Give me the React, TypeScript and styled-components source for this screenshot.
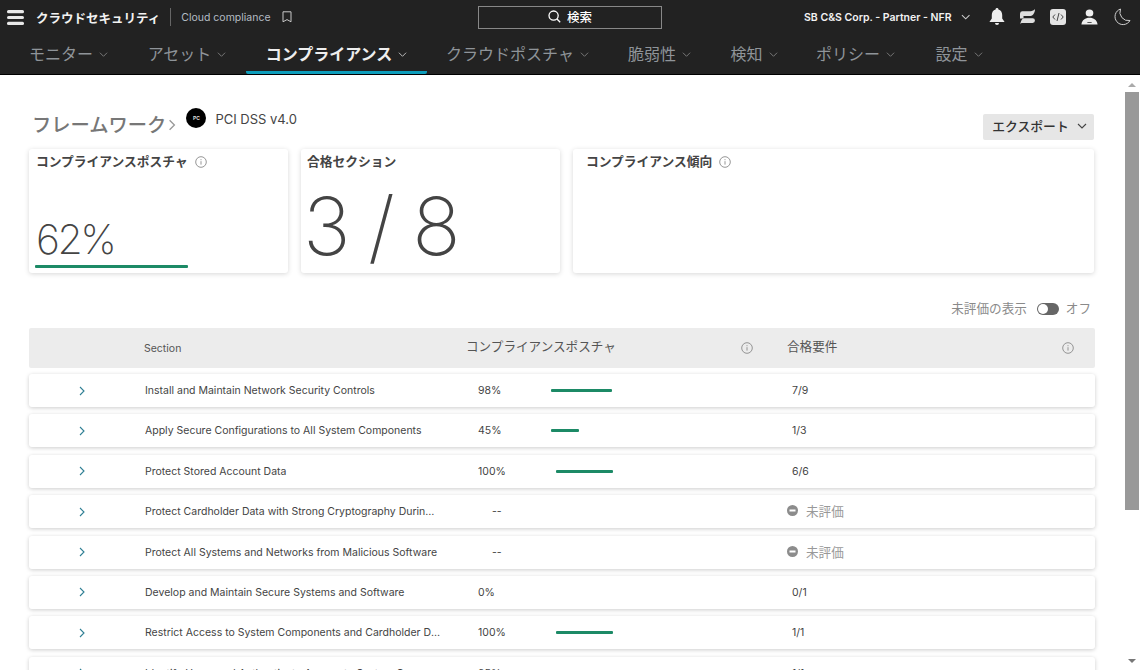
import React from "react";
import styled, { createGlobalStyle } from "styled-components";

const GlobalStyle = createGlobalStyle`
  html, body {
    margin: 0;
    height: 100%;
    overflow: hidden;
    background: #fff;
    font-family: Inter, "Noto Sans CJK JP", sans-serif;
  }
`;

const NAV_ITEMS = [
  { label: "モニター", width: 119 },
  { label: "アセット", width: 118 },
  { label: "コンプライアンス", width: 181, active: true },
  { label: "クラウドポスチャ", width: 181 },
  { label: "脆弱性", width: 103 },
  { label: "検知", width: 86 },
  { label: "ポリシー", width: 117 },
  { label: "設定", width: 90 },
];

const ROWS = [
  { name: "Install and Maintain Network Security Controls", pct: "98%", bar: 61, pass: "7/9" },
  { name: "Apply Secure Configurations to All System Components", pct: "45%", bar: 28, pass: "1/3" },
  { name: "Protect Stored Account Data", pct: "100%", bar: 57, pass: "6/6" },
  { name: "Protect Cardholder Data with Strong Cryptography During Transmission", pct: "--" },
  { name: "Protect All Systems and Networks from Malicious Software", pct: "--" },
  { name: "Develop and Maintain Secure Systems and Software", pct: "0%", bar: 0, pass: "0/1" },
  { name: "Restrict Access to System Components and Cardholder Data", pct: "100%", bar: 57, pass: "1/1" },
  { name: "Identify Users and Authenticate Access to System Components", pct: "95%", bar: 57, pass: "1/1" },
];

function Chevron({ size = 8, color = "#888", dir = "down" }: { size?: number; color?: string; dir?: "down" | "right" }) {
  const d = dir === "down" ? "M1 3l4 4 4-4" : "M3 1l4 4-4 4";
  return (
    <svg width={size} height={size} viewBox="0 0 10 10" fill="none" stroke={color} strokeWidth="1.1">
      <path d={d} />
    </svg>
  );
}

function InfoIcon({ color = "#8a8a8a" }: { color?: string }) {
  return (
    <svg width="12" height="12" viewBox="0 0 12 12" fill="none" stroke={color} strokeWidth="0.9">
      <circle cx="6" cy="6" r="5.3" />
      <path d="M6 5.2v3.4M6 3.2v1" />
    </svg>
  );
}

export default function App() {
  return (
    <>
      <GlobalStyle />
      <Page>
        <Header>
          <TopBar>
            <Brand>
              <svg width="17" height="15" viewBox="0 0 17 15" fill="#e8e8e8">
                <rect y="0" width="17" height="3.2" rx="1.5" />
                <rect y="5.9" width="17" height="3.2" rx="1.5" />
                <rect y="11.8" width="17" height="3.2" rx="1.5" />
              </svg>
              <BrandName>クラウドセキュリティ</BrandName>
              <Divider />
              <Crumb>Cloud compliance</Crumb>
              <svg width="10" height="12" viewBox="0 0 10 12" fill="none" stroke="#c8c8c8" strokeWidth="1">
                <path d="M1 .8h8v10L5 8.6 1 10.8z" />
              </svg>
            </Brand>
            <SearchBox>
              <svg width="13" height="13" viewBox="0 0 13 13" fill="none" stroke="#fff" strokeWidth="1.3">
                <circle cx="5.6" cy="5.6" r="4.6" />
                <path d="M9 9l3.2 3.2" />
              </svg>
              検索
            </SearchBox>
            <Account>
              <Tenant>SB C&amp;S Corp. - Partner - NFR</Tenant>
              <Chevron size={10} color="#ccc" />
            </Account>
            <Tools>
              <svg width="16" height="18" viewBox="0 0 16 18" fill="#eee">
                <path d="M8 0a1.4 1.4 0 0 1 1.4 1.5C12 2.2 13.2 4.4 13.2 7v3.6L15.6 14H.4l2.4-3.4V7c0-2.6 1.2-4.8 3.8-5.5A1.4 1.4 0 0 1 8 0zM6 15h4a2 2 0 0 1-4 0z" />
              </svg>
              <svg width="15" height="16" viewBox="0 0 15 16" fill="#dedede">
                <path d="M2.4 2.3H10.5C12.3 2.2 13.9 1.3 15 0C15 3.3 13.4 6.7 10.5 6.9H2.4a2.3 2.3 0 0 1 0-4.6z" />
                <path d="M0 4.5h3.5v5H0z" />
                <path d="M12.6 9.2H4.5C2.7 9.3 1.1 10.5 0 16C0 15.8.2 13.9 2 13.9H12.6a2.35 2.35 0 0 0 0-4.7z" />
              </svg>
              <CodeBadge>
                <svg width="12" height="10" viewBox="0 0 12 10" fill="none" stroke="#333" strokeWidth="0.9">
                  <path d="M3 2.5L.8 5 3 7.5M9 2.5L11.2 5 9 7.5M7 1L5 9" />
                </svg>
              </CodeBadge>
              <svg width="17" height="16" viewBox="0 0 16 16" fill="#eee" preserveAspectRatio="none">
                <circle cx="8" cy="4" r="3.6" />
                <path d="M.4 15.5C1 11 4 8.8 8 8.8s7 2.2 7.6 6.7zM6 13h4v.8H6z" fillRule="evenodd" />
              </svg>
              <svg width="18" height="18" viewBox="0 0 18 18" fill="none" stroke="#cfcfcf" strokeWidth="1">
                <path d="M7.5 1A8 8 0 1 0 17 12.5 8.5 8.5 0 0 1 7.5 1z" />
              </svg>
            </Tools>
          </TopBar>
          <Nav>
            {NAV_ITEMS.map((item) => (
              <NavItem key={item.label} $width={item.width} $active={item.active}>
                {item.label}
                <NavCaret>
                  <Chevron size={9} color={item.active ? "#bbb" : "#777"} />
                </NavCaret>
              </NavItem>
            ))}
          </Nav>
        </Header>
        <Body>
          <Content>
            <TitleRow>
              <Title>フレームワーク</Title>
              <TitleSep>
                <Chevron size={12} color="#999" dir="right" />
              </TitleSep>
              <Logo>PC</Logo>
              <FrameworkName>PCI DSS v4.0</FrameworkName>
              <ExportButton>
                エクスポート
                <Chevron size={10} color="#444" />
              </ExportButton>
            </TitleRow>
            <Cards>
              <Card>
                <CardTitle>
                  コンプライアンスポスチャ
                  <InfoIcon />
                </CardTitle>
                <Percent>62%</Percent>
                <PostureBar />
              </Card>
              <Card $pad={6}>
                <CardTitle>合格セクション</CardTitle>
                <BigCount>3 / 8</BigCount>
              </Card>
              <Card $pad={13}>
                <CardTitle>
                  コンプライアンス傾向
                  <InfoIcon />
                </CardTitle>
              </Card>
            </Cards>
            <ToggleRow>
              未評価の表示
              <ToggleTrack>
                <ToggleKnob />
              </ToggleTrack>
              オフ
            </ToggleRow>
            <TableHead>
              <HeadSection>Section</HeadSection>
              <HeadLabel>コンプライアンスポスチャ</HeadLabel>
              <InfoIcon />
              <HeadLabel>合格要件</HeadLabel>
              <InfoIcon />
            </TableHead>
            <RowList>
              {ROWS.map((row) => (
                <Row key={row.name}>
                  <Expander>
                    <Chevron size={10} color="#2f7f94" dir="right" />
                  </Expander>
                  <SectionName>{row.name}</SectionName>
                  <PostureCell $empty={row.pct === "--"}>
                    {row.pct}
                    {row.bar ? <MiniBar style={{ width: row.bar }} /> : null}
                  </PostureCell>
                  {row.pass ? (
                    <PassCount>{row.pass}</PassCount>
                  ) : (
                    <NotRated>
                      <svg width="11" height="11" viewBox="0 0 11 11">
                        <circle cx="5.5" cy="5.5" r="5.5" fill="#8c8c8c" />
                        <rect x="2.5" y="4.5" width="6" height="2" fill="#fff" />
                      </svg>
                      未評価
                    </NotRated>
                  )}
                </Row>
              ))}
            </RowList>
          </Content>
          <ScrollRail>
            <ScrollArrow />
            <ScrollThumb />
            <ScrollArrow $down />
          </ScrollRail>
        </Body>
      </Page>
    </>
  );
}

const Page = styled.div`
  height: 670px;
  display: flex;
  flex-direction: column;
  overflow: hidden;
`;

const Header = styled.header`
  flex: none;
  height: 74px;
  background: #222;
  border-bottom: 1px solid #000;
`;

const TopBar = styled.div`
  height: 34px;
  display: flex;
  align-items: center;
  padding: 0 0 0 7px;
`;

const Brand = styled.div`
  width: 471px;
  display: flex;
  align-items: center;
`;

const BrandName = styled.span`
  margin-left: 12px;
  font-size: 12.5px;
  font-weight: 700;
  color: #f2f2f2;
`;

const Divider = styled.span`
  width: 1px;
  height: 18px;
  margin: 0 10px;
  background: #666;
`;

const Crumb = styled.span`
  margin-right: 11px;
  font-size: 10.5px;
  color: #b4bcc4;
`;

const SearchBox = styled.div`
  box-sizing: border-box;
  width: 184px;
  height: 23px;
  padding-bottom: 2px;
  border: 1px solid #888;
  display: flex;
  align-items: center;
  justify-content: center;
  gap: 6px;
  font-size: 12.5px;
  font-weight: 500;
  color: #fff;
`;

const Account = styled.div`
  margin-left: 142px;
  width: 166px;
  display: flex;
  align-items: center;
  gap: 9px;
`;

const Tenant = styled.span`
  font-size: 10.5px;
  font-weight: 600;
  color: #f2f2f2;
  white-space: nowrap;
`;

const Tools = styled.div`
  margin-left: 19px;
  display: flex;
  align-items: center;
  gap: 15px;
`;

const CodeBadge = styled.span`
  width: 16px;
  height: 16px;
  border-radius: 3px;
  background: #e4e4e4;
  display: flex;
  align-items: center;
  justify-content: center;
`;

const Nav = styled.nav`
  height: 40px;
  display: flex;
  padding-left: 9px;
`;

const NavItem = styled.div<{ $width: number; $active?: boolean }>`
  width: ${(p) => p.$width}px;
  box-sizing: border-box;
  display: flex;
  align-items: center;
  justify-content: center;
  gap: 6px;
  font-size: 16px;
  font-weight: ${(p) => (p.$active ? 700 : 400)};
  color: ${(p) => (p.$active ? "#eee" : "#8f9499")};
  border-bottom: 3px solid ${(p) => (p.$active ? "#0d9dbb" : "transparent")};
  border-radius: 0 0 2px 2px;
`;

const NavCaret = styled.span`
  display: flex;
  margin-top: 3px;
`;

const Body = styled.main`
  flex: 1;
  min-height: 0;
  display: flex;
`;

const Content = styled.div`
  flex: 1;
  min-width: 0;
  padding: 33px 28px 0 29px;
  overflow: hidden;
`;

const TitleRow = styled.div`
  height: 41px;
  display: flex;
  align-items: flex-start;
`;

const Title = styled.h1`
  margin: 3px 0 0 3px;
  font-size: 19.3px;
  line-height: 28px;
  font-weight: 500;
  color: #777;
`;

const TitleSep = styled.span`
  margin: 7px 8px 0 0;
`;

const Logo = styled.span`
  width: 20px;
  height: 20px;
  border-radius: 50%;
  background: #000;
  color: #ddd;
  font-size: 5px;
  font-weight: 700;
  display: flex;
  align-items: center;
  justify-content: center;
`;

const FrameworkName = styled.span`
  margin-left: 9px;
  font-size: 13px;
  line-height: 22px;
  color: #444;
`;

const ExportButton = styled.button`
  margin: 6px 1px 0 auto;
  padding: 0 0 3px 2px;
  width: 111px;
  height: 26px;
  border: 0;
  border-radius: 2px;
  background: #e6e6e6;
  display: flex;
  align-items: center;
  justify-content: center;
  gap: 8px;
  font: 500 12.8px Inter, "Noto Sans CJK JP", sans-serif;
  color: #333;
`;

const Cards = styled.div`
  display: grid;
  grid-template-columns: 259px 259px 521px;
  gap: 13px;
  height: 124px;
`;

const Card = styled.section<{ $pad?: number }>`
  position: relative;
  box-sizing: border-box;
  padding: 4px ${(p) => p.$pad ?? 7}px 0;
  border-radius: 3px;
  background: #fff;
  box-shadow: 0 1px 5px rgba(0, 0, 0, 0.16);
  overflow: hidden;
`;

const CardTitle = styled.h2`
  margin: 0;
  display: flex;
  align-items: center;
  gap: 7px;
  font-size: 12.75px;
  line-height: 18px;
  font-weight: 700;
  color: #444;
`;

const Percent = styled.div`
  margin-top: 43px;
  font-size: 41px;
  line-height: 50px;
  font-weight: 200;
  letter-spacing: -2.5px;
  color: #444;
`;

const PostureBar = styled.div`
  width: 153px;
  height: 3px;
  margin: 1px 0 0 -1px;
  background: #1c8a66;
  border-radius: 1px;
`;

const BigCount = styled.div`
  margin: 10px 0 0 -4px;
  font-size: 80px;
  line-height: 90px;
  font-weight: 200;
  word-spacing: -5px;
  color: #444;
  white-space: nowrap;
`;

const ToggleRow = styled.div`
  height: 55px;
  display: flex;
  align-items: flex-end;
  justify-content: flex-end;
  gap: 7px;
  padding: 0 4px 11px 0;
  box-sizing: border-box;
  font-size: 12.6px;
  line-height: 16px;
  color: #8a8a8a;
`;

const ToggleTrack = styled.span`
  position: relative;
  width: 22px;
  height: 12px;
  margin: 0 0 2px 3px;
  border-radius: 6px;
  background: #666;
`;

const ToggleKnob = styled.span`
  position: absolute;
  left: 1px;
  top: 1px;
  width: 10px;
  height: 10px;
  border-radius: 50%;
  background: #fff;
`;

const TableHead = styled.div`
  height: 40px;
  display: grid;
  grid-template-columns: 115px 322px 275px 46px 275px 12px;
  align-items: center;
  background: #ececec;
  border-radius: 2px;
  color: #555;
`;

const HeadSection = styled.span`
  grid-column: 2;
  font-size: 10.5px;
`;

const HeadLabel = styled.span`
  padding-bottom: 5px;
  font-size: 12.6px;
  white-space: nowrap;
`;

const RowList = styled.div`
  margin-top: 6px;
  display: flex;
  flex-direction: column;
  gap: 7.4px;
`;

const Row = styled.div`
  flex: none;
  height: 33px;
  display: grid;
  grid-template-columns: 116px 333px 309px 1fr;
  align-items: center;
  border-radius: 3px;
  background: #fff;
  box-shadow: 0 1px 4px rgba(0, 0, 0, 0.2);
  font-size: 10.5px;
  color: #444;
`;

const Expander = styled.span`
  justify-self: center;
  display: flex;
  transform: translateX(-5px);
`;

const SectionName = styled.span`
  width: 295.7px;
  overflow: hidden;
  white-space: nowrap;
  text-overflow: ellipsis;
`;

const PostureCell = styled.span<{ $empty?: boolean }>`
  display: flex;
  align-items: center;
  gap: 50px;
  padding-left: ${(p) => (p.$empty ? 14 : 0)}px;
`;

const MiniBar = styled.span`
  height: 3px;
  background: #1c8a66;
  border-radius: 1px;
`;

const PassCount = styled.span`
  padding-left: 5px;
`;

const NotRated = styled.span`
  display: flex;
  align-items: center;
  gap: 8px;
  padding-bottom: 2px;
  font-size: 12.6px;
  color: #999;
`;

const ScrollRail = styled.aside`
  flex: none;
  width: 17px;
  display: flex;
  flex-direction: column;
  align-items: center;
  padding-top: 8px;
`;

const ScrollArrow = styled.span<{ $down?: boolean }>`
  flex: none;
  width: 0;
  height: 0;
  border-left: 4px solid transparent;
  border-right: 4px solid transparent;
  ${(p) => (p.$down ? "border-top: 4px solid #777;" : "border-bottom: 4px solid #aaa;")}
`;

const ScrollThumb = styled.div`
  flex: none;
  width: 14px;
  height: 418px;
  margin: 5px 0 149px;
  background: #999;
`;
